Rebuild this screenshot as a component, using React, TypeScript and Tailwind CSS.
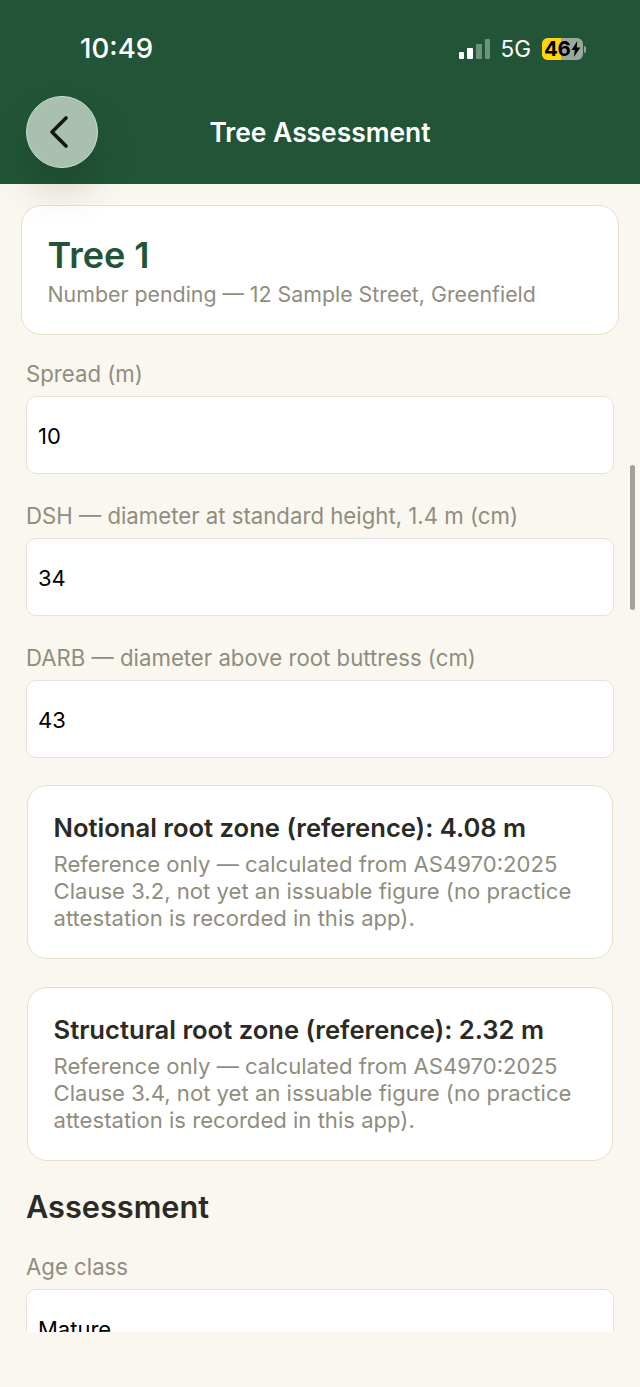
import { ChevronLeft } from "lucide-react";

const font = { fontFamily: "Inter, 'Liberation Sans', sans-serif" };

function Field({ label, value }: { label: string; value: string }) {
  return (
    <div className="flex flex-col">
      <div className="h-[24px] pt-[1px] flex items-center text-[22.2px] leading-[24px] text-[#908d7e] whitespace-nowrap">{label}</div>
      <div className="mt-[11px] h-[78px] shrink-0 flex items-center px-[11px] pt-[2px] bg-white rounded-[10px] border border-[#e4e2dc] text-[22px] text-black">
        {value}
      </div>
    </div>
  );
}

function RefCard({ title, clause }: { title: string; clause: string }) {
  return (
    <div className="mx-px h-[174px] shrink-0 bg-white rounded-[20px] border-[1.5px] border-[#e8dfcc] pl-[25.5px] pr-4 pt-[26px]">
      <div className="text-[25.6px] leading-[32px] font-semibold text-[#2b2a24] whitespace-nowrap">{title}</div>
      <div className="mt-[7px] text-[22.1px] leading-[27px] text-[#908d7e] whitespace-nowrap">
        <div>Reference only — calculated from AS4970:2025</div>
        <div>{clause}, not yet an issuable figure (no practice</div>
        <div>attestation is recorded in this app).</div>
      </div>
    </div>
  );
}

function StatusBar() {
  return (
    <div className="h-[96px] flex items-start justify-between pl-[80px] pr-[54px] pt-[31px]">
      <span className="text-[27.6px] leading-[34px] font-medium text-white">10:49</span>
      <div className="flex items-center h-[34px] mt-[1px]">
        <div className="flex items-end gap-[3px] h-[20px]">
          <div className="w-[5px] h-[7px] rounded-[1px] bg-white" />
          <div className="w-[6px] h-[11px] rounded-[1px] bg-white" />
          <div className="w-[6px] h-[15px] rounded-[1px] bg-[#6d937e]" />
          <div className="w-[5px] h-[20px] rounded-[1px] bg-[#6d937e]" />
        </div>
        <span className="ml-[11px] text-[22.5px] text-white leading-none">5G</span>
        <div className="ml-[11px] flex items-center">
          <div className="relative w-[41px] h-[22px] rounded-[6px] bg-[#9aa89d] flex">
            <div className="w-[19px] h-full rounded-l-[6px] bg-[#ffd60a]" />
            <div className="absolute inset-0 flex items-center pl-[2px] text-[20.5px] font-bold text-black leading-none tracking-[-0.3px]">
              46
              <svg width="10" height="16" viewBox="0 0 10 16" className="shrink-0">
                <path d="M6.2 0 0.6 9h3.2L2.8 16 9.4 6.4H5.8z" fill="#000" />
              </svg>
            </div>
          </div>
          <div className="ml-[1px] w-[2px] h-[7px] rounded-r-[2px] bg-[#8fa497]" />
        </div>
      </div>
    </div>
  );
}

export default function App() {
  return (
    <div className="relative w-[640px] h-[1387px] flex flex-col bg-[#faf7f0] overflow-hidden" style={font}>
      <header className="h-[184px] shrink-0 bg-[#225537]">
        <StatusBar />
        <div className="flex items-center justify-center h-[72px]">
          <h1 className="text-[26.4px] leading-[32px] font-semibold text-white">Tree Assessment</h1>
        </div>
      </header>

      {/* soft shadow under the back button */}
      <div className="absolute left-[26px] top-[96px] w-[72px] h-[72px] rounded-full bg-[#a9bfb0] border border-[#c6e3d3] flex items-center justify-center shadow-[0_24px_40px_rgba(0,0,0,0.14)] z-10">
        <ChevronLeft size={56} strokeWidth={1.55} className="text-[#10150f] shrink-0 -ml-[6px]" />
      </div>

      <main className="h-[1148px] shrink-0 overflow-hidden px-[26px] pt-[21px] flex flex-col">
        <section className="-mx-[5px] h-[130px] shrink-0 bg-white rounded-[20px] border-[1.5px] border-[#e8dfcc] pl-[25.5px] pt-[27px]">
          <div className="text-[36px] leading-[44px] font-semibold text-[#225537]">Tree 1</div>
          <div className="mt-[3px] text-[21.35px] leading-[28px] text-[#908d7e] whitespace-nowrap">
            Number pending — 12 Sample Street, Greenfield
          </div>
        </section>

        <div className="mt-[26px] flex flex-col gap-[29px] shrink-0">
          <Field label="Spread (m)" value="10" />
          <Field label="DSH — diameter at standard height, 1.4 m (cm)" value="34" />
          <Field label="DARB — diameter above root buttress (cm)" value="43" />
        </div>

        <div className="mt-[27px] flex flex-col gap-[28px] shrink-0">
          <RefCard title="Notional root zone (reference): 4.08 m" clause="Clause 3.2" />
          <RefCard title="Structural root zone (reference): 2.32 m" clause="Clause 3.4" />
        </div>

        <h2 className="mt-[27px] text-[30.7px] leading-[38px] font-semibold text-[#2b2a24] shrink-0">Assessment</h2>
        <div className="mt-[28px] shrink-0">
          <Field label="Age class" value="Mature" />
        </div>
      </main>

      <div className="absolute left-[630px] top-[465px] w-[5px] h-[145px] rounded-full bg-[#a3a199]" />
    </div>
  );
}
